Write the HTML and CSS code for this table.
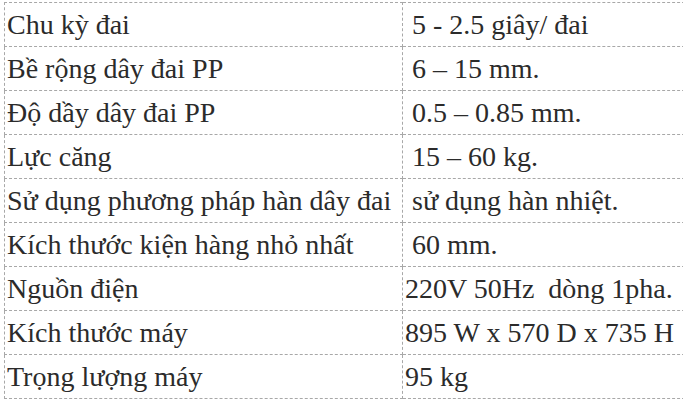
FILE: index.html
```html
<!DOCTYPE html>
<html lang="vi">
<head>
<meta charset="utf-8">
<title>Thông số kỹ thuật</title>
<link rel="stylesheet" href="styles.css">
</head>
<body>
<table class="spec">
  <tbody>
    <tr><td class="name">Chu kỳ đai</td><td class="val">&nbsp;5 - 2.5 giây/ đai</td></tr>
    <tr><td class="name">Bề rộng dây đai PP</td><td class="val">&nbsp;6 – 15 mm.</td></tr>
    <tr><td class="name">Độ dầy dây đai PP</td><td class="val">&nbsp;0.5 – 0.85 mm.</td></tr>
    <tr><td class="name">Lực căng</td><td class="val">&nbsp;15 – 60 kg.</td></tr>
    <tr><td class="name">Sử dụng phương pháp hàn dây đai</td><td class="val">&nbsp;sử dụng hàn nhiệt.</td></tr>
    <tr><td class="name">Kích thước kiện hàng nhỏ nhất</td><td class="val">&nbsp;60 mm.</td></tr>
    <tr><td class="name">Nguồn điện</td><td class="val">220V 50Hz &nbsp;dòng 1pha.</td></tr>
    <tr><td class="name">Kích thước máy</td><td class="val">895 W x 570 D x 735 H</td></tr>
    <tr><td class="name">Trọng lượng máy</td><td class="val">95 kg</td></tr>
  </tbody>
</table>
</body>
</html>
```

FILE: styles.css
```css
html, body {
  margin: 0;
  padding: 0;
  background: #ffffff;
  overflow: hidden;
}

body {
  padding: 2px 0 0 4px;
  font-family: "Liberation Serif", "Times New Roman", serif;
  font-size: 28px;
  color: #2b2b2b;
}

.spec {
  border-collapse: collapse;
  width: 700px;
  table-layout: fixed;
}

.spec td {
  border: 1px dashed #a8a8a8;
  height: 44px;
  padding: 0 2px;
  vertical-align: middle;
  white-space: nowrap;
  box-sizing: border-box;
}

.spec .name {
  width: 398px;
}

.spec .val {
  width: 302px;
}
```
